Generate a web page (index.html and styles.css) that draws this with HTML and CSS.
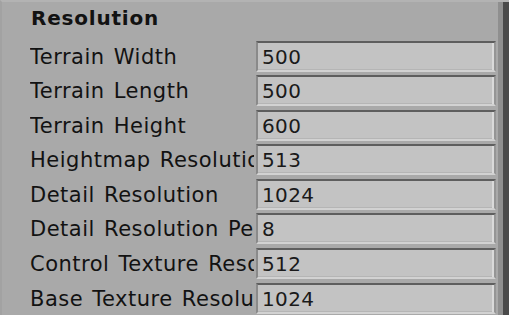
FILE: index.html
```html
<!DOCTYPE html>
<html>
<head>
<meta charset="utf-8">
<link rel="stylesheet" href="styles.css">
</head>
<body>
<div class="window">
  <div class="panel">
    <div class="heading">Resolution</div>
    <div class="rows">
      <div class="row"><div class="label">Terrain Width</div><div class="field">500</div></div>
      <div class="row"><div class="label">Terrain Length</div><div class="field">500</div></div>
      <div class="row"><div class="label">Terrain Height</div><div class="field">600</div></div>
      <div class="row"><div class="label">Heightmap Resolution</div><div class="field">513</div></div>
      <div class="row"><div class="label">Detail Resolution</div><div class="field">1024</div></div>
      <div class="row"><div class="label">Detail Resolution Per Patch</div><div class="field">8</div></div>
      <div class="row"><div class="label">Control Texture Resolution</div><div class="field">512</div></div>
      <div class="row"><div class="label">Base Texture Resolution</div><div class="field">1024</div></div>
    </div>
  </div>
  <div class="edge"></div>
</div>
</body>
</html>
```

FILE: styles.css
```css
html, body {
  margin: 0;
  padding: 0;
  background: #a9a9a9;
  width: 509px;
  height: 315px;
  overflow: hidden;
}

.window {
  display: flex;
  height: 315px;
  border-top: 2px solid #b3b3b3;
  border-left: 2px solid #a2a2a2;
  box-sizing: border-box;
}

.panel {
  flex: 1;
  padding-left: 28px;
  font-family: "DejaVu Sans", Verdana, sans-serif;
  color: #121212;
}

.heading {
  font-weight: bold;
  font-size: 20px;
  letter-spacing: 0.8px;
  line-height: 20px;
  padding-top: 6px;
  padding-left: 1px;
  height: 38.5px;
  box-sizing: border-box;
}

.rows {
  display: flex;
  flex-direction: column;
  gap: 4.6px;
}

.row {
  display: grid;
  grid-template-columns: 224px 2px 240px;
  height: 30px;
  align-items: stretch;
}

.label {
  grid-column: 1;
  font-size: 21px;
  letter-spacing: 0.5px;
  word-spacing: 2px;
  line-height: 30px;
  padding-top: 1px;
  white-space: nowrap;
  overflow: hidden;
}

.field {
  grid-column: 3;
  background: #c3c3c3;
  border-top: 2px solid #5e5e5e;
  border-left: 2px solid #8a8a8a;
  border-right: 2px solid #959595;
  border-bottom: 2px solid #d2d2d2;
  box-shadow: inset -2px 0 0 #dadada, inset 0 -1px 0 #b5b5b5;
  box-sizing: border-box;
  font-size: 20px;
  letter-spacing: 0.4px;
  line-height: 26px;
  padding-left: 4px;
  padding-top: 1px;
  color: #1a1a1a;
}

.edge {
  width: 12px;
  background: linear-gradient(to right, #a9a9a9 0 1px, #8f8f8f 1px 6px, #4a4a4a 6px);
}
```
